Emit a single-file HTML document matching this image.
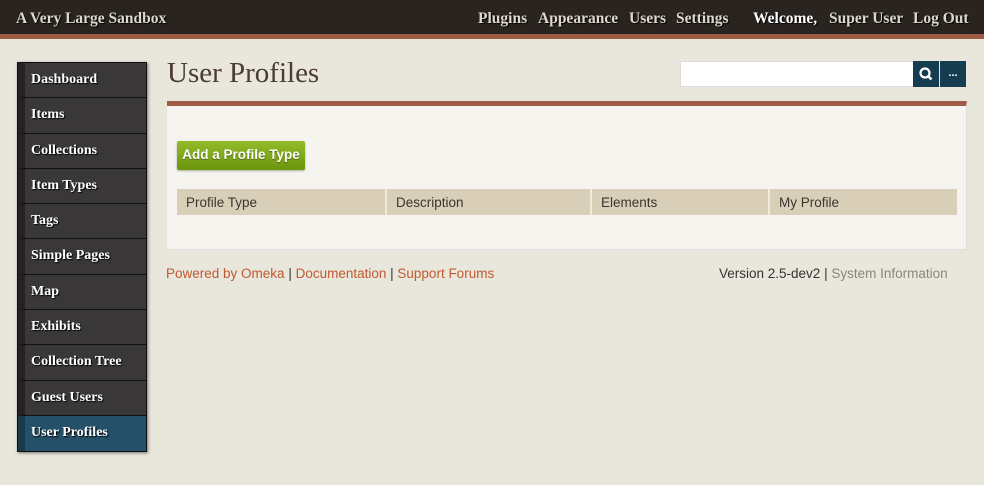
<!DOCTYPE html>
<html><head><meta charset="utf-8"><style>
*{margin:0;padding:0;box-sizing:border-box}
body{width:984px;height:485px;background:#e9e6dc;font-family:"Liberation Sans",sans-serif;position:relative;overflow:hidden}
.hdr{position:absolute;left:0;top:0;width:984px;height:39px;background:#2a2420;border-bottom:5px solid #9c5b42;font-family:"Liberation Serif",serif;font-weight:bold;color:#ddd7cc;font-size:15.5px}
.hdr span{position:absolute;top:10px;text-shadow:1px 1px 1px #000}
.side{position:absolute;left:17px;top:62px;width:130px;box-shadow:1px 1px 3px rgba(0,0,0,.5);border:1px solid #111}
.side div{height:35.3px;background:#3a3738;border-left:7px solid #262224;border-bottom:1px solid #111;color:#fff;font-family:"Liberation Serif",serif;font-weight:bold;font-size:14px;padding-left:6px;line-height:34px;text-shadow:1px 1px 1px #000}
.side div.act{background:#245068;border-left-color:#1a3a4c;border-bottom:none}
h1{position:absolute;left:167px;top:57px;font-family:"Liberation Serif",serif;font-weight:normal;font-size:29px;color:#4a3b36}
.search{position:absolute;left:680px;top:61px;width:234px;height:26px;background:#fff;border:1px solid #ddd}
.b1,.b2{position:absolute;top:61px;width:26px;height:26px;background:#163c50;color:#fff;text-align:center}
.panel{position:absolute;left:167px;top:101px;width:800px;height:149px;background:#f6f4ef;border-top:5px solid #a05c45;border-right:1px solid #ddd;border-bottom:1px solid #ddd}
.btn{position:absolute;left:10px;top:35px;width:128px;height:29px;background:linear-gradient(#93bb2a,#6b950d);color:#fff;font-size:13.5px;font-weight:bold;text-align:center;line-height:28px;border-radius:2px;box-shadow:0 1px 2px rgba(0,0,0,.3);text-shadow:0 1px 1px rgba(0,0,0,.4)}
.th{position:absolute;top:83px;height:26px;background:#d9cfb8;color:#3d3530;font-size:13.5px;line-height:27px;padding-left:9px;border-right:2px solid #efe9dc}
.ft{position:absolute;top:266px;font-size:13.5px}
</style></head><body>
<div class="hdr">
<span style="left:16px">A Very Large Sandbox</span>
<span style="left:478px">Plugins</span><span style="left:538px">Appearance</span><span style="left:629px">Users</span><span style="left:676px">Settings</span>
<span style="left:753px;color:#fff">Welcome,</span><span style="left:829px">Super User</span><span style="left:913px">Log Out</span>
</div>
<div class="side">
<div>Dashboard</div><div>Items</div><div>Collections</div><div>Item Types</div><div>Tags</div><div>Simple Pages</div><div>Map</div><div>Exhibits</div><div>Collection Tree</div><div>Guest Users</div><div class="act">User Profiles</div>
</div>
<h1>User Profiles</h1>
<div class="search"></div>
<div class="b1" style="left:913px"><svg width="26" height="26"><circle cx="12" cy="12" r="4.5" stroke="#fff" stroke-width="2.2" fill="none"/><line x1="15" y1="15" x2="18.5" y2="18.5" stroke="#fff" stroke-width="2.6"/></svg></div>
<div class="b2" style="left:940px;line-height:24px;font-size:11px;font-weight:bold">...</div>
<div class="panel">
<div class="btn">Add a Profile Type</div>
<div class="th" style="left:10px;width:210px">Profile Type</div>
<div class="th" style="left:220px;width:205px">Description</div>
<div class="th" style="left:425px;width:178px">Elements</div>
<div class="th" style="left:603px;width:187px;border-right:none">My Profile</div>
</div>
<div class="ft" style="left:166px;color:#c05a30">Powered by Omeka <span style="color:#333">|</span> Documentation <span style="color:#333">|</span> Support Forums</div>
<div class="ft" style="left:719px;color:#333">Version 2.5-dev2 | <span style="color:#8c8580">System Information</span></div>
</body></html>
